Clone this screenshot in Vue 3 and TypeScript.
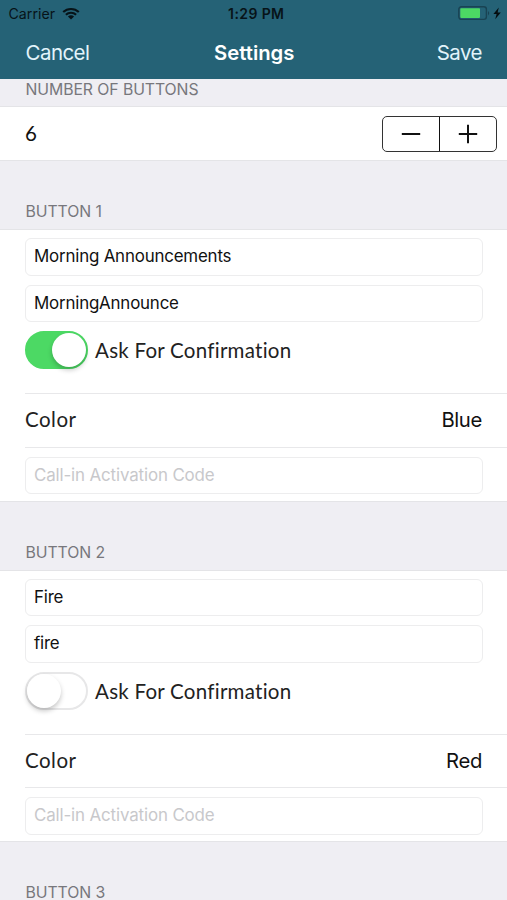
<script setup lang="ts">
import { ref } from 'vue'

interface ButtonConfig {
  id: number
  title: string
  action: string
  confirm: boolean
  color: string
}

const count = ref(6)

const buttons = ref<ButtonConfig[]>([
  { id: 1, title: 'Morning Announcements', action: 'MorningAnnounce', confirm: true, color: 'Blue' },
  { id: 2, title: 'Fire', action: 'fire', confirm: false, color: 'Red' },
])
</script>

<template>
  <div class="screen">
    <header class="top">
      <div class="status">
        <div class="carrier">
          <span class="carrier-name">Carrier</span>
          <svg class="wifi" width="18" height="13" viewBox="0 0 18 13">
            <path d="M1.2 5.1a11.2 11.2 0 0 1 15.6 0" />
            <path d="M3.9 7.8a7.3 7.3 0 0 1 10.2 0" />
            <path class="dot" d="M9 12.6 5.9 9.6a4.5 4.5 0 0 1 6.2 0z" />
          </svg>
        </div>
        <span class="time">1:29 PM</span>
        <svg class="battery" width="44" height="15" viewBox="0 0 44 15">
          <rect class="shell" x="0.8" y="0.8" width="27.6" height="12.6" rx="2.6" />
          <rect class="charge" x="2.3" y="2.3" width="19.7" height="9.6" rx="0.8" />
          <path class="cap" d="M30 5q2.4 2.2 0 4.4z" />
          <path class="bolt" d="M40.8 1.6 35.4 8h3.2l-1.4 5.3L42.8 6.6h-3.2z" />
        </svg>
      </div>
      <nav class="nav">
        <span class="cancel">Cancel</span>
        <h1>Settings</h1>
        <span class="save">Save</span>
      </nav>
    </header>

    <h2 class="heading first">NUMBER OF BUTTONS</h2>
    <div class="count-row">
      <span class="count">{{ count }}</span>
      <div class="stepper">
        <button type="button" @click="count--">
          <svg width="20" height="20" viewBox="0 0 20 20"><path d="M0.8 10H19.2" /></svg>
        </button>
        <button type="button" @click="count++">
          <svg width="20" height="20" viewBox="0 0 20 20"><path d="M0.8 10H19.2M10 0.8V19.2" /></svg>
        </button>
      </div>
    </div>

    <template v-for="b in buttons" :key="b.id">
      <h2 class="heading">BUTTON {{ b.id }}</h2>
      <section class="group">
        <div class="details">
          <div class="field">{{ b.title }}</div>
          <div class="field">{{ b.action }}</div>
          <div class="confirm">
            <button type="button" class="toggle" :class="{ on: b.confirm }" @click="b.confirm = !b.confirm">
              <span class="knob"></span>
            </button>
            <span class="avenir">Ask For Confirmation</span>
          </div>
        </div>
        <div class="color-row">
          <span class="avenir color-label">Color</span>
          <span class="value">{{ b.color }}</span>
        </div>
        <div class="code-row">
          <div class="field placeholder">Call-in Activation Code</div>
        </div>
      </section>
    </template>
    <h2 class="heading">BUTTON 3</h2>
  </div>
</template>

<style>
body {
  background: #efeef3;
}
</style>

<style scoped>
.screen {
  width: 507px;
  height: 900px;
  overflow: hidden;
  background: #efeef3;
  color: #111;
  font-family: Inter, 'Liberation Sans', sans-serif;
}

.top {
  height: 79px;
  background: #256276;
}

.status {
  display: grid;
  grid-template-columns: 1fr auto 1fr;
  align-items: center;
  height: 27px;
  padding: 0 5px 0 8.5px;
  color: #071318;
}

.carrier {
  display: flex;
  align-items: center;
  gap: 7px;
}

.carrier-name {
  font-size: 14.2px;
  letter-spacing: 0;
}

.wifi {
  margin-top: -1px;
}

.wifi path {
  fill: none;
  stroke: #071318;
  stroke-width: 2.1;
}

.wifi .dot {
  fill: #071318;
  stroke: none;
}

.time {
  padding-left: 2px;
  font-size: 14px;
  font-weight: 600;
  letter-spacing: 0.4px;
}

.battery {
  justify-self: end;
}

.shell {
  fill: none;
  stroke: #194353;
  stroke-width: 1.4;
}

.charge {
  fill: #4cd964;
}

.cap {
  fill: #194353;
}

.bolt {
  fill: #050d10;
}

.nav {
  display: grid;
  grid-template-columns: 1fr auto 1fr;
  align-items: center;
  height: 51px;
  padding: 0 25px 0 25.5px;
  color: #fff;
  font-size: 20.5px;
}

.nav h1 {
  margin: 0 0 1px;
  padding-left: 1px;
  font-size: 20.3px;
  font-weight: 600;
}

.cancel,
.save {
  color: #e2f4fb;
  letter-spacing: -0.55px;
}

.save {
  justify-self: end;
}

.heading {
  box-sizing: border-box;
  display: flex;
  align-items: flex-end;
  height: 68px;
  margin: 0;
  padding: 0 25px 7px 25.5px;
  color: #77777c;
  font-size: 15.8px;
  font-weight: 400;
  letter-spacing: -0.08px;
  line-height: 20px;
}

.heading.first {
  height: 27px;
  padding-bottom: 6.4px;
}

.count-row {
  box-sizing: border-box;
  display: flex;
  align-items: center;
  justify-content: space-between;
  height: 55px;
  padding: 0 10px 0 25px;
  border-top: 1px solid #e4e4e7;
  border-bottom: 1px solid #e4e4e7;
  background: #fff;
}

.count {
  padding-bottom: 2px;
  font-family: Lato, sans-serif;
  font-size: 20.5px;
}

.stepper {
  box-sizing: border-box;
  display: flex;
  width: 115px;
  height: 36px;
  border: 1.4px solid #333;
  border-radius: 5px;
}

.stepper button {
  display: flex;
  flex: 1;
  align-items: center;
  justify-content: center;
  padding: 0;
  border: 0;
  background: none;
}

.stepper button + button {
  border-left: 1px solid #111;
}

.stepper path {
  fill: none;
  stroke: #111;
  stroke-width: 2;
}

.group {
  box-sizing: border-box;
  height: 272.7px;
  border-top: 1px solid #e4e4e7;
  border-bottom: 1px solid #e4e4e7;
  background: #fff;
}

.details {
  display: flex;
  flex-direction: column;
  gap: 9px;
  box-sizing: border-box;
  height: 163px;
  padding: 8.2px 24px 0 25px;
}

.field {
  box-sizing: border-box;
  width: 458px;
  height: 37.4px;
  padding: 0 8px;
  border: 1px solid #ededee;
  border-radius: 6px;
  color: #111;
  font-size: 16.9px;
  letter-spacing: -0.19px;
  line-height: 35.4px;
  white-space: nowrap;
}

.placeholder {
  color: #c8c8cb;
  letter-spacing: -0.13px;
}

.confirm {
  display: flex;
  align-items: center;
  gap: 7px;
}

.toggle {
  box-sizing: border-box;
  display: flex;
  align-items: center;
  width: 63px;
  height: 38px;
  padding: 0;
  border: 2px solid #e7e7e8;
  border-radius: 19px;
  background: #fff;
}

.toggle.on {
  justify-content: flex-end;
  border-color: #4cd964;
  background: #4cd964;
}

.knob {
  width: 34px;
  height: 34px;
  border-radius: 50%;
  background: #fff;
  box-shadow: 0 3px 5px rgba(0, 0, 0, 0.22);
}

.avenir {
  color: #222;
  font-family: Lato, sans-serif;
  font-size: 20.5px;
  letter-spacing: 0.26px;
}

.color-label {
  padding-bottom: 2px;
  letter-spacing: 0.5px;
}

.color-row {
  box-sizing: border-box;
  display: flex;
  align-items: center;
  justify-content: space-between;
  height: 54.5px;
  margin-left: 25px;
  padding-right: 25px;
  border-top: 1px solid #e8e8ea;
  border-bottom: 1px solid #e8e8ea;
}

.value {
  padding-bottom: 1px;
  font-size: 20.3px;
  letter-spacing: -0.35px;
}

.code-row {
  padding: 9.2px 0 0 25px;
}
</style>
